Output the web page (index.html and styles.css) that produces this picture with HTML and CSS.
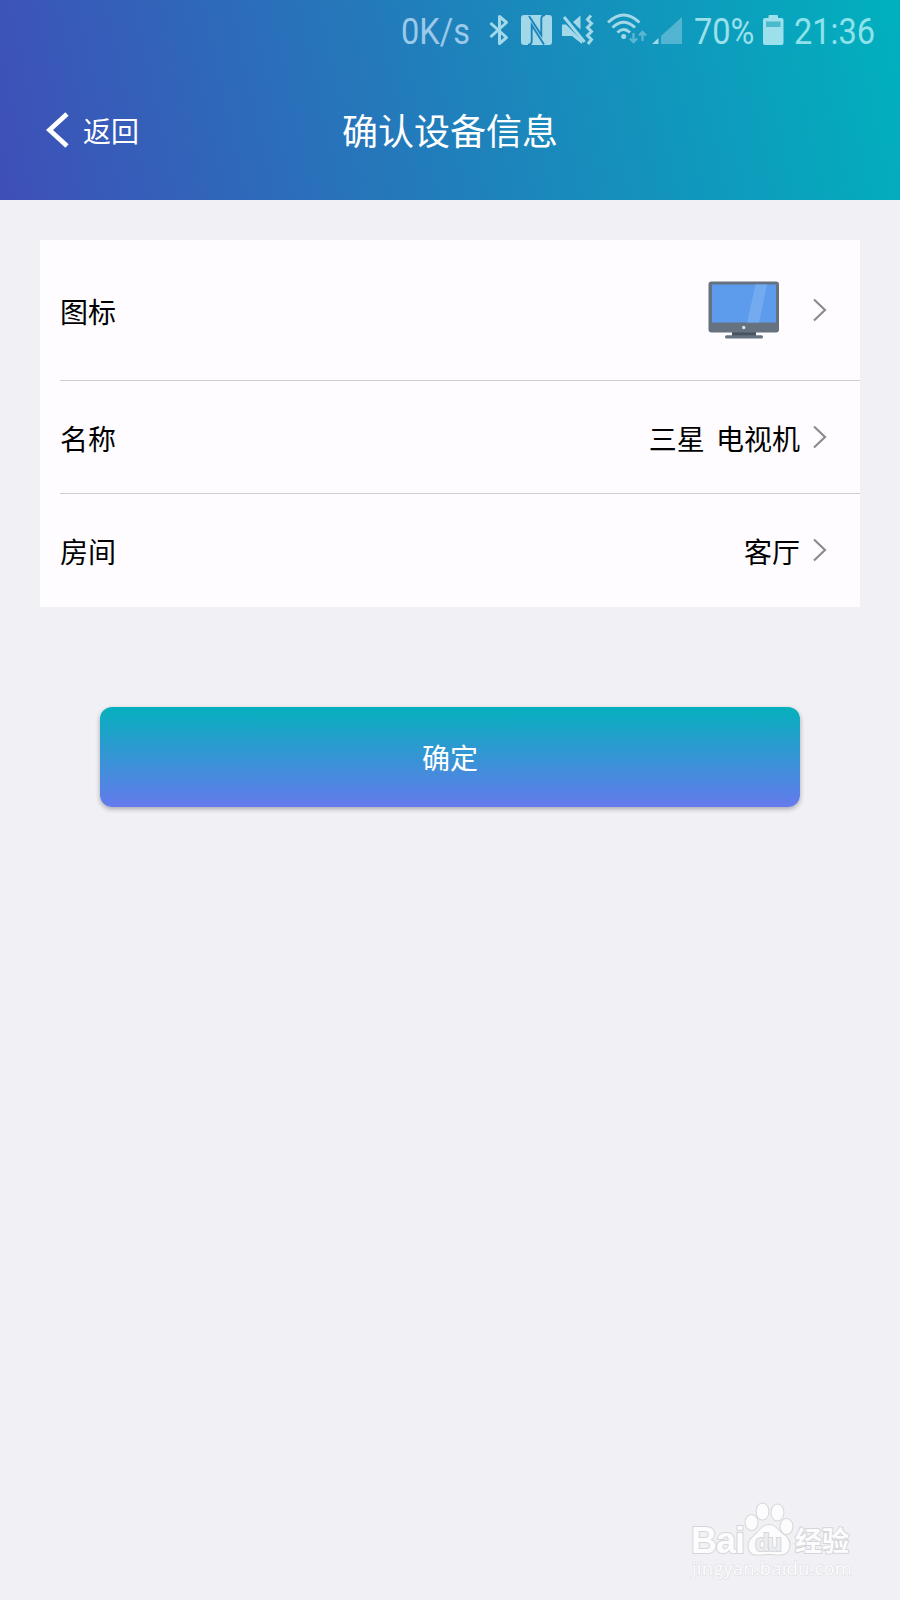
FILE: index.html
```html
<!DOCTYPE html>
<html lang="zh-CN">
<head>
    <meta charset="UTF-8">
    <meta name="viewport" content="width=device-width, initial-scale=1.0">
    <title>确认设备信息</title>
    <link rel="stylesheet" href="styles.css">
</head>
<body>

    <header class="header">
        <div class="status-bar">
            <span class="status-text speed"><span>0K/s</span></span>
            <svg class="bluetooth" width="20" height="40" viewBox="0 0 20 40">
                <path d="M1.500 13L17.500 27.500L10.500 33.500V6.500L17.500 12.500L1.500 27" fill="none" stroke="currentColor" stroke-width="3" stroke-linejoin="round"/>
            </svg>
            <svg class="nfc" width="31" height="40" viewBox="0 0 31 40">
                <rect x="0" y="5" width="31" height="30" rx="3" fill="currentColor"/>
                <path d="M7 35Q10.700 34.500 10.700 31V15L23 34.500M24 5Q20.300 5.500 20.300 9V25L8 6" fill="none" stroke="#1b83b9" stroke-width="1.900"/>
            </svg>
            <svg class="mute" width="34" height="40" viewBox="0 0 34 40">
                <path d="M1 14.500H5L21 30.500V34L11 26H1ZM12 12L19.500 5.500V19.500Z" fill="currentColor"/>
                <path d="M3 7L23.500 32" fill="none" stroke="currentColor" stroke-width="3"/>
                <path d="M30 5.500L26.500 9.500L30.500 13.500L26.500 17.500L30.500 21.500L26.500 25.500L30.500 29.500L27 34" fill="none" stroke="currentColor" stroke-width="3"/>
            </svg>
            <svg class="wifi" width="40" height="40" viewBox="0 0 40 40">
                <g fill="none" stroke="currentColor" stroke-width="3">
                    <path d="M1 12.500Q16.500 -2.500 32.500 12.500"/>
                    <path d="M5.500 17.500Q16.500 7 28 17.500"/>
                    <path d="M10.500 22.500Q16.500 16.500 23 22.500"/>
                </g>
                <circle cx="16.700" cy="26.500" r="2.500" fill="currentColor"/>
                <path d="M26.500 23V32M23 28.500L26.500 32L30 28.500M35.500 31V22M32 25.500L35.500 22L39 25.500" fill="none" stroke="currentColor" stroke-width="2.400" opacity=".5"/>
            </svg>
            <svg class="signal" width="30" height="40" viewBox="0 0 30 40">
                <path d="M9 34V26L30 7V34Z" fill="currentColor" opacity=".45"/>
                <path d="M0 34L6.500 28V34Z" fill="currentColor"/>
            </svg>
            <span class="status-text percent"><span>70%</span></span>
            <svg class="battery" width="21" height="40" viewBox="0 0 21 40">
                <path d="M2 8H5.500V6Q5.500 5 6.500 5H14Q15 5 15 6V8H18.500Q20.500 8 20.500 10V33Q20.500 35 18.500 35H2Q0 35 0 33V10Q0 8 2 8Z" fill="currentColor"/>
                <rect x="3" y="11.500" width="14.500" height="5.500" fill="#49bacb"/>
            </svg>
            <span class="status-text time"><span>21:36</span></span>
        </div>
        <div class="nav-bar">
            <a class="back">
                <svg width="24" height="38" viewBox="0 0 24 38">
                    <path d="M21 3L3.500 19L21 35" fill="none" stroke="currentColor" stroke-width="4.800"/>
                </svg>
                <span>返回</span>
            </a>
            <h1>确认设备信息</h1>
        </div>
    </header>

    <main>
        <ul class="info-list">
            <li class="row row-icon">
                <span class="label">图标</span>
                <svg class="tv" width="72" height="58" viewBox="0 0 72 58">
                    <rect x="24" y="50" width="24" height="5" fill="#4a5260"/>
                    <rect x=".5" y=".5" width="70.500" height="51" rx="3" fill="#66727f"/>
                    <rect x="4" y="3.500" width="64" height="38" fill="#5d9cec"/>
                    <path d="M47.500 3.500H59L51 41.500H39Z" fill="#74aaf0"/>
                    <circle cx="35.700" cy="46.500" r="1.700" fill="#dfe3e8"/>
                    <rect x="17" y="54.300" width="38" height="3.200" rx="1.500" fill="#66727f"/>
                </svg>
                <svg class="arrow" width="14" height="24" viewBox="0 0 14 24"><path d="M1 1.500L12 12L1 22.500"/></svg>
            </li>
            <li class="row">
                <span class="label">名称</span>
                <span class="value">三星 电视机</span>
                <svg class="arrow" width="14" height="24" viewBox="0 0 14 24"><path d="M1 1.500L12 12L1 22.500"/></svg>
            </li>
            <li class="row">
                <span class="label">房间</span>
                <span class="value">客厅</span>
                <svg class="arrow" width="14" height="24" viewBox="0 0 14 24"><path d="M1 1.500L12 12L1 22.500"/></svg>
            </li>
        </ul>
        <button class="btn">确定</button>
    </main>

    <svg class="watermark" width="170" height="84" viewBox="0 0 170 84">
        <g class="mark">
            <text class="bai" x="3" y="53" textLength="54">Bai</text>
            <ellipse cx="63.500" cy="22.500" rx="6" ry="7.500"/>
            <ellipse cx="74.500" cy="11.500" rx="6" ry="8"/>
            <ellipse cx="89.500" cy="12.500" rx="6" ry="8"/>
            <ellipse cx="98.500" cy="26.500" rx="6" ry="7.500"/>
            <path d="M81 25C88 25 90 31 96 35C105 41 102 55 93 54.500C88 55 86 54 81 54C76 54 73 55 68 54.500C59 54 58 42 66 36C72 31 74 25 81 25Z"/>
            <text class="du" x="67" y="50.500" textLength="27">du</text>
            <text class="jingyan" x="107" y="51" textLength="54">经验</text>
        </g>
        <text class="url" x="4" y="75" textLength="160">jingyan.baidu.com</text>
    </svg>

</body>
</html>
```
FILE: styles.css
```css
* {
    margin: 0;
    padding: 0;
    box-sizing: border-box;
}

body {
    position: relative;
    width: 900px;
    height: 1600px;
    overflow: hidden;
    font-family: "Noto Sans CJK SC", sans-serif;
    background: #f0f0f5;
    color: #000000;
}

svg {
    display: block;
    flex-shrink: 0;
}

.header {
    height: 200px;
    background: linear-gradient(77.5deg, #3f4fb8, #00b1be);
    color: #ffffff;
}

.status-bar {
    display: flex;
    height: 60px;
    padding: 10px 0 0 401px;
    color: #a3d8e8;
}

.status-text {
    flex-shrink: 0;
    height: 40px;
    font-family: Roboto, sans-serif;
    font-size: 37px;
    line-height: 43px;
    white-space: nowrap;
}

.status-text span {
    display: inline-block;
    transform: scaleX(0.88);
    transform-origin: left;
}

.speed {
    width: 88px;
    color: #9bc9e8;
}

.bluetooth {
    margin-right: 12px;
}

.nfc {
    margin-right: 9px;
}

.mute {
    margin-right: 12px;
}

.wifi {
    margin-right: 5px;
}

.signal {
    margin-right: 12px;
}

.percent {
    width: 69px;
    color: #9be0ea;
}

.battery {
    margin-right: 10px;
    color: #9be0ea;
}

.time {
    width: 90px;
    color: #8fe2ea;
}

.nav-bar {
    display: grid;
    grid-template-columns: 1fr auto 1fr;
    align-items: center;
    height: 140px;
    padding-left: 46px;
    padding-right: 46px;
}

.back {
    display: flex;
    align-items: center;
    gap: 13px;
    height: 140px;
    padding-bottom: 1px;
    font-size: 28px;
}

.nav-bar h1 {
    padding-bottom: 3px;
    font-size: 36px;
    font-weight: 400;
}

.info-list {
    margin: 40px 40px 0;
    padding-left: 20px;
    background: #fefcfe;
    list-style: none;
}

.row {
    display: flex;
    align-items: center;
    height: 113px;
    padding-right: 33px;
    border-bottom: 1px solid #cfcdd1;
    font-size: 28px;
}

.row-icon {
    height: 141px;
}

.row:last-child {
    padding-bottom: 1px;
    border-bottom: none;
}

.label {
    margin-right: auto;
    padding-top: 1px;
}

.tv {
    margin-right: 33px;
}

.value {
    margin-right: 13px;
    padding-top: 1px;
    word-spacing: 5px;
}

.arrow {
    fill: none;
    stroke: #8c8a8d;
    stroke-width: 2.2;
}

.btn {
    display: block;
    width: 700px;
    height: 100px;
    margin: 100px auto 0;
    padding-bottom: 1px;
    border: none;
    border-radius: 12px;
    background: linear-gradient(#05b0bd, #657aec);
    box-shadow: 0 2px 5px rgba(0, 0, 0, 0.3);
    color: #ffffff;
    font-family: inherit;
    font-size: 28px;
}

.watermark {
    position: absolute;
    left: 688px;
    top: 1500px;
}

.mark {
    fill: #fcfcfd;
    stroke: #d6d6da;
    stroke-width: 2;
    paint-order: stroke;
}

.bai {
    font: bold 36px "Liberation Sans", sans-serif;
}

.du {
    font: bold 24px "Liberation Sans", sans-serif;
    fill: #ededf1;
}

.jingyan {
    font: bold 27px "Noto Sans CJK SC", sans-serif;
}

.url {
    font: 18.5px "Open Sans", sans-serif;
    fill: #fcfcfd;
    stroke: #dfdfe3;
    stroke-width: 1.2;
    paint-order: stroke;
}
```
